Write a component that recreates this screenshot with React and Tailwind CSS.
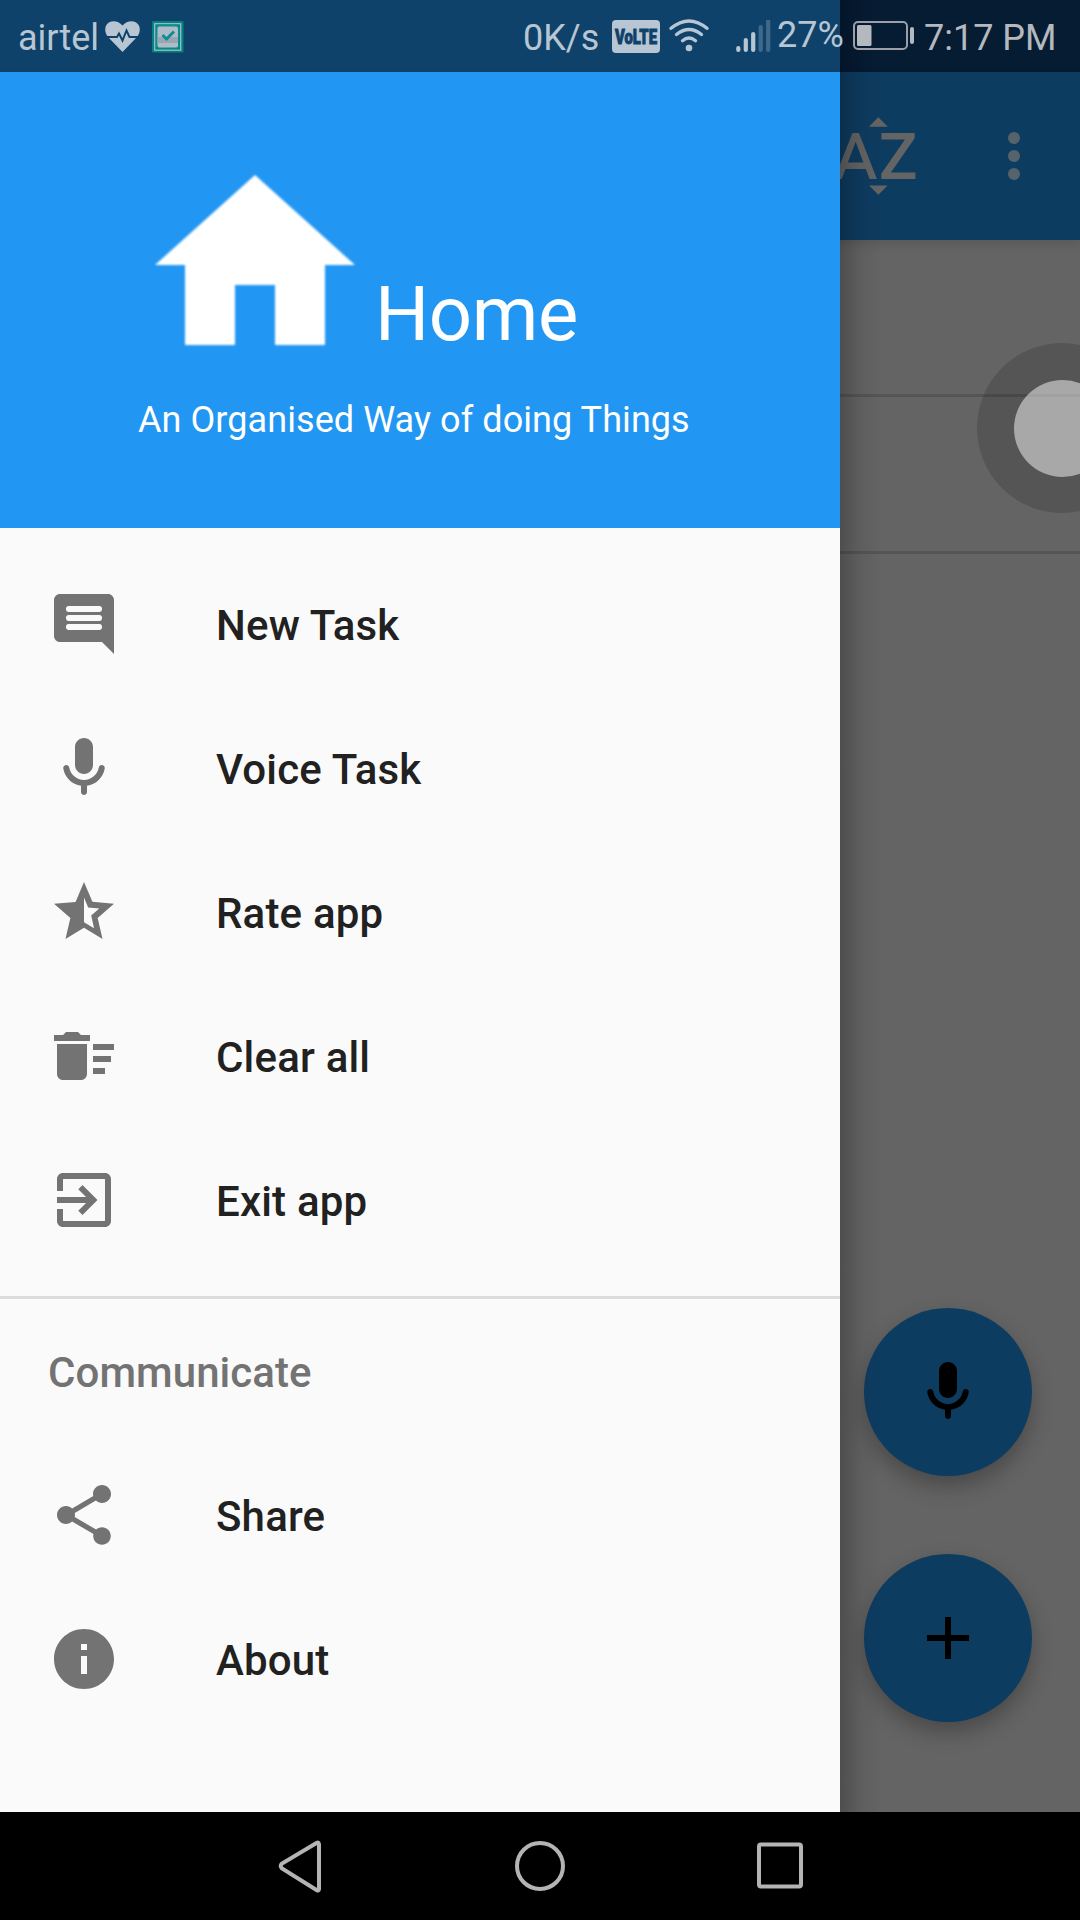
import React from "react";

const PATHS = {
  comment:
    "M22 4c0-1.1-.9-2-2-2H4c-1.1 0-2 .9-2 2v12c0 1.1.9 2 2 2h14l4 4V4zM17.2 14H6.8a.8.8 0 0 1-.8-.8v-.4c0-.44.36-.8.8-.8h10.4c.44 0 .8.36.8.8v.4a.8.8 0 0 1-.8.8zm0-3H6.8a.8.8 0 0 1-.8-.8v-.4c0-.44.36-.8.8-.8h10.4c.44 0 .8.36.8.8v.4a.8.8 0 0 1-.8.8zm0-3H6.8a.8.8 0 0 1-.8-.8v-.4c0-.44.36-.8.8-.8h10.4c.44 0 .8.36.8.8v.4a.8.8 0 0 1-.8.8z",
  mic: "M12 14c1.66 0 3-1.34 3-3V5c0-1.66-1.34-3-3-3S9 3.34 9 5v6c0 1.66 1.34 3 3 3zm5.91-3c-.49 0-.9.36-.98.85C16.52 14.2 14.47 16 12 16s-4.52-1.8-4.93-4.15c-.08-.49-.49-.85-.98-.85-.61 0-1.09.54-1 1.14.49 3 2.89 5.35 5.91 5.78V20c0 .55.45 1 1 1s1-.45 1-1v-2.08c3.02-.43 5.42-2.78 5.91-5.78.1-.6-.39-1.14-1-1.14z",
  star: "M22 9.24l-7.19-.62L12 2 9.19 8.63 2 9.24l5.46 4.73L5.82 21 12 17.27 18.18 21l-1.63-7.03L22 9.24zM12 15.4V7.2l1.4 3.3 3.7.35-2.7 2.35.95 4.2L12 15.4z",
  sweep:
    "M15 16h4v2h-4zm0-8h7v2h-7zm0 4h6v2h-6zM3 18c0 1.1.9 2 2 2h6c1.1 0 2-.9 2-2V8H3v10zM14 5h-3l-1-1H6L5 5H2v2h12z",
  exit: "M10.09 15.59L11.5 17l5-5-5-5-1.41 1.41L12.67 11H3v2h9.67l-2.58 2.59zM19 3H5c-1.11 0-2 .9-2 2v4h2V5h14v14H5v-4H3v4c0 1.1.89 2 2 2h14c1.1 0 2-.9 2-2V5c0-1.1-.9-2-2-2z",
  share:
    "M18 16.08c-.76 0-1.44.3-1.96.77L8.91 12.7c.05-.23.09-.46.09-.7s-.04-.47-.09-.7l7.05-4.11c.54.5 1.25.81 2.04.81 1.66 0 3-1.34 3-3s-1.34-3-3-3-3 1.34-3 3c0 .24.04.47.09.7L8.04 9.81C7.5 9.31 6.79 9 6 9c-1.66 0-3 1.34-3 3s1.34 3 3 3c.79 0 1.5-.31 2.04-.81l7.12 4.16c-.05.21-.08.43-.08.65 0 1.61 1.31 2.92 2.92 2.92s2.92-1.31 2.92-2.92-1.31-2.92-2.92-2.92z",
  info: "M12 2C6.48 2 2 6.48 2 12s4.48 10 10 10 10-4.48 10-10S17.52 2 12 2zm1 15h-2v-6h2v6zm0-8h-2V7h2v2z",
  plus: "M19 13h-6v6h-2v-6H5v-2h6V5h2v6h6v2z",
  home: "M10 20v-6h4v6h5v-8h3L12 3 2 12h3v8z",
  sortAlpha:
    "M14.94 4.66h-4.72l2.36-2.36zm-4.69 14.71h4.66l-2.33 2.33zM6.1 6.27L1.6 17.73h1.84l.92-2.45h5.11l.92 2.45h1.84L7.74 6.27H6.1zm-1.13 7.37l1.94-5.18 1.94 5.18H4.97zm10.76 2.5h6.12v1.59h-8.53v-1.29l5.92-8.56h-5.88v-1.6h8.3v1.26l-5.93 8.6z",
};

function Icon({ name, className }) {
  return (
    <svg viewBox="0 0 24 24" fill="currentColor" className={className} aria-hidden="true">
      <path d={PATHS[name]} />
    </svg>
  );
}

function StatusBar() {
  return (
    <header className="flex h-[72px] shrink-0 bg-[linear-gradient(to_right,#0f426a_840px,#04152a_840px,#061c32_876px)] pt-[20px] text-[36px] leading-[42px] whitespace-nowrap text-[#b7c6d2]">
      <span className="ml-[18px] w-[86px] -mt-[3px]">airtel</span>
      <svg viewBox="0 0 36 33" className="ml-[1px] h-[33px] w-[36px]">
        <path
          d="M17.5 32 L3 17 C-.5 13-.5 7 2 4.200 C5 0 13 0 17.5 5.500 C22 0 30 0 33 4.200 C35.500 7 35.500 13 32 17 Z"
          fill="#b7c6d2"
        />
        <path d="M0 17 H12 L14 13.500 L17.500 20.500 L21.500 10.500 L24.500 17 H36" fill="none" stroke="#0f426a" strokeWidth="2" />
      </svg>
      <svg viewBox="0 0 32 33" className="ml-[11px] mt-px h-[33px] w-[32px]">
        <rect width="31.500" height="31.500" rx="1" fill="#07807f" />
        <rect x="2.700" y="2.700" width="26" height="26.500" fill="none" stroke="#9ec4ca" strokeWidth="1.200" />
        <rect x="4" y="3.500" width="23.500" height="24" rx="3" fill="#0a8d93" />
        <rect x="5.500" y="5.500" width="20.500" height="21" rx="2" fill="#afbcc8" />
        <rect x="5.500" y="16" width="20.500" height="6" fill="#9aa7b2" />
        <path d="M10.500 14 l4 4 l7.500 -7.500" fill="none" stroke="#0a8d93" strokeWidth="2.800" />
      </svg>
      <span className="ml-[339px] w-[80px] -mt-[3px]">0K/s</span>
      <span className="ml-[9px] flex h-[33px] w-[48px] items-center justify-center rounded-[4px] bg-[#b7c6d2]">
        <svg viewBox="0 0 48 33" className="h-[33px] w-[48px] overflow-visible">
          <text x="3" y="24" textLength="42" lengthAdjust="spacingAndGlyphs" fill="#0f426a" stroke="#0f426a" strokeWidth="1" fontFamily="Roboto, sans-serif" fontWeight="900" fontSize="21">
            VoLTE
          </text>
        </svg>
      </span>
      <svg viewBox="0 0 40 33" className="ml-[9px] h-[33px] w-[40px] overflow-visible" fill="none" stroke="#b7c6d2" strokeWidth="3.400" strokeLinecap="round">
        <path d="M2 8.300 Q20-6.500 38 8.300" />
        <path d="M7.500 14.500 Q20 4.500 32.500 14.500" />
        <path d="M13.500 20.700 Q20 15.300 26.500 20.700" />
        <circle cx="20" cy="28" r="3.300" fill="#b7c6d2" stroke="none" />
      </svg>
      <svg viewBox="0 0 35 33" className="ml-[27px] h-[33px] w-[35px]" stroke="#b7c6d2" strokeWidth="4.200" strokeLinecap="round">
        <path d="M2.300 28v2M9.800 20v10M17.200 14v16" />
        <path d="M24.700 7v23M32.200 1v29" stroke="#40688a" />
      </svg>
      <span className="ml-[6px] w-[66px] -mt-[6px]">27%</span>
      <svg viewBox="0 0 62 31" className="ml-[10px] mt-px h-[31px] w-[62px]">
        <rect x="1" y="1" width="53" height="27" rx="4" fill="none" stroke="#9a9fa9" strokeWidth="2" />
        <rect x="4" y="4" width="14.500" height="21" rx="1.500" fill="#b4b8bf" />
        <rect x="57" y="6" width="4" height="17" rx="2" fill="#b4b8bf" />
      </svg>
      <span className="ml-[9px] -mt-[3px] text-[#b4b8bf]">7:17 PM</span>
    </header>
  );
}

function Fab({ icon }) {
  return (
    <button className="flex size-[168px] items-center justify-center rounded-full bg-[#0d3c61] text-black shadow-[0_10px_22px_rgba(0,0,0,0.28)]">
      <Icon name={icon} className="size-[72px]" />
    </button>
  );
}

function TaskScreen() {
  return (
    <main className="flex grow flex-col bg-[#646464]">
      <div className="z-10 flex h-[168px] shrink-0 items-center bg-[#0d3c61] pl-[828px] shadow-[0_4px_10px_rgba(0,0,0,0.12)]">
        <Icon name="sortAlpha" className="size-[96px] text-[#646464] blur-[0.7px]" />
        <div className="ml-[84px] flex flex-col gap-[6px]">
          <i className="size-[12px] rounded-full bg-[#55636d]" />
          <i className="size-[12px] rounded-full bg-[#55636d]" />
          <i className="size-[12px] rounded-full bg-[#55636d]" />
        </div>
      </div>
      <div className="h-[157px] border-b-3 border-[#555555]" />
      <div className="h-[157px] border-b-3 border-[#555555]" />
      <div className="mt-[754px] flex flex-col items-end gap-[78px] pr-[48px]">
        <Fab icon="mic" />
        <Fab icon="plus" />
      </div>
    </main>
  );
}

function MenuItem({ icon, label }) {
  return (
    <li className="flex h-[144px] items-center pl-[48px]">
      <Icon name={icon} className="size-[72px] text-[#737373]" />
      <span className="ml-[96px] mt-[4px] text-[42px] leading-[48px] font-medium tracking-[0.18px] text-[#212121]">{label}</span>
    </li>
  );
}

function Drawer() {
  return (
    <aside className="absolute top-[72px] left-0 z-20 flex h-[1740px] w-[840px] flex-col bg-[#fafafa]">
      <div className="h-[456px] shrink-0 bg-[#2196f3] pt-[72px] text-white">
        <div className="flex pl-[135px]">
          <Icon name="home" className="size-[240px] translate-y-px blur-[1.2px]" />
          <span className="mt-[126px] text-[76px] leading-[88px] tracking-[-0.4px]">Home</span>
        </div>
        <p className="mt-[15px] pl-[138px] text-[36px] leading-[42px] tracking-[0.07px] whitespace-nowrap">An Organised Way of doing Things</p>
      </div>
      <ul className="pt-[24px]">
        <MenuItem icon="comment" label="New Task" />
        <MenuItem icon="mic" label="Voice Task" />
        <MenuItem icon="star" label="Rate app" />
        <MenuItem icon="sweep" label="Clear all" />
        <MenuItem icon="exit" label="Exit app" />
      </ul>
      <h2 className="mt-[24px] h-[147px] border-t-3 border-[#dcdcdc] pt-[50px] pl-[48px] text-[42px] leading-[48px] font-medium tracking-[0.07px] text-[#737373]">
        Communicate
      </h2>
      <ul>
        <MenuItem icon="share" label="Share" />
        <MenuItem icon="info" label="About" />
      </ul>
      <div className="absolute top-0 left-full h-full w-[42px] bg-linear-to-r from-black/22 via-black/6 to-transparent" />
    </aside>
  );
}

function NavBar() {
  return (
    <nav className="z-20 flex h-[108px] shrink-0 items-center justify-center gap-[180px] bg-black">
      {[
        <path key="b" d="M49 10.500 V55 Q49 57.500 46.500 56 L12 34.500 Q9.500 32 12 29.500 L46.500 9 Q49 7.500 49 10.500Z" />,
        <circle key="h" cx="30" cy="32" r="23" />,
        <rect key="r" x="9" y="10.500" width="42" height="42" rx="2" />,
      ].map((shape, i) => (
        <svg key={i} viewBox="0 0 60 64" className="h-[64px] w-[60px]" fill="none" stroke="#b4b4b4" strokeWidth="4">
          {shape}
        </svg>
      ))}
    </nav>
  );
}

export default function App() {
  return (
    <div className="relative flex h-[1920px] w-[1080px] flex-col overflow-hidden bg-black font-['Roboto',sans-serif]">
      <StatusBar />
      <TaskScreen />
      <Drawer />
      <div className="absolute top-[343px] left-[977px] z-10 flex size-[170px] items-center justify-center rounded-full bg-black/15">
        <div className="size-[97px] rounded-full bg-white/49" />
      </div>
      <NavBar />
    </div>
  );
}
